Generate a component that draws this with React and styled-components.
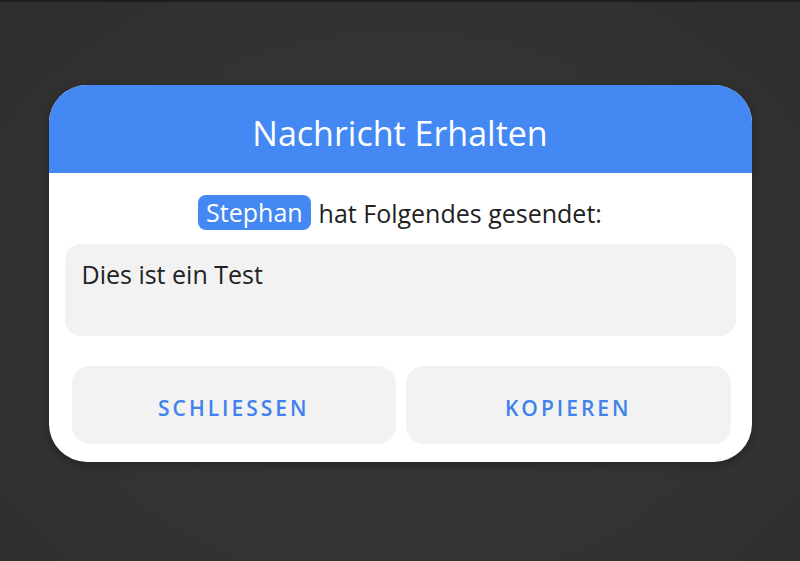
import React from 'react'
import styled, { createGlobalStyle } from 'styled-components'

const GlobalStyle = createGlobalStyle`
    html, body {
        margin: 0;
        padding: 0;
        height: 100%;
    }

    body {
        background: #343434;
        font-family: "Open Sans", "Noto Sans", sans-serif;
    }

    #root {
        min-height: 561px;
    }
`

const Backdrop = styled.div`
    min-height: 561px;
    box-sizing: border-box;
    border-top: 2px solid #1e1e1e;
    padding-top: 83px;
    background: radial-gradient(ellipse at 50% 55%, #383838 0%, #333333 60%, #2e2e2e 100%);
`

const Dialog = styled.div`
    width: 703px;
    margin: 0 auto;
    background: #ffffff;
    border-radius: 38px;
    overflow: hidden;
    box-shadow: 0 3px 10px rgba(0, 0, 0, 0.3);
`

const Header = styled.div`
    height: 88px;
    box-sizing: border-box;
    padding-top: 8px;
    background: #4388f3;
    color: #ffffff;
    display: flex;
    align-items: center;
    justify-content: center;
    font-size: 34px;
    font-weight: 400;
`

const Body = styled.div`
    padding: 22px 16px 18px;
    display: flex;
    flex-direction: column;
`

const Sender = styled.div`
    display: flex;
    justify-content: center;
    align-items: center;
    gap: 8px;
    font-size: 25px;
    color: #222222;
`

const Chip = styled.span`
    background: #4388f3;
    color: #ffffff;
    border-radius: 8px;
    padding: 0 8px;
    line-height: 35px;
`

const Message = styled.div`
    margin-top: 14px;
    height: 92px;
    box-sizing: border-box;
    padding: 13px 17px;
    background: #f2f2f2;
    border-radius: 16px;
    font-size: 25px;
    color: #222222;
`

const Actions = styled.div`
    margin-top: 30px;
    padding: 0 5px 0 7px;
    display: grid;
    grid-template-columns: 1fr 1fr;
    gap: 10px;
`

const Button = styled.button`
    height: 78px;
    padding: 6px 0 0;
    border: none;
    border-radius: 18px;
    background: #f2f2f2;
    color: #3f82ee;
    font-family: inherit;
    font-size: 21px;
    font-weight: 600;
    letter-spacing: 3px;
    text-transform: uppercase;
    cursor: pointer;
`

const App = () => {
    return (
        <>
            <GlobalStyle />
            <Backdrop>
                <Dialog>
                    <Header>Nachricht Erhalten</Header>
                    <Body>
                        <Sender>
                            <Chip>Stephan</Chip>
                            <span>hat Folgendes gesendet:</span>
                        </Sender>
                        <Message>Dies ist ein Test</Message>
                        <Actions>
                            <Button>Schliessen</Button>
                            <Button>Kopieren</Button>
                        </Actions>
                    </Body>
                </Dialog>
            </Backdrop>
        </>
    )
}

export default App
